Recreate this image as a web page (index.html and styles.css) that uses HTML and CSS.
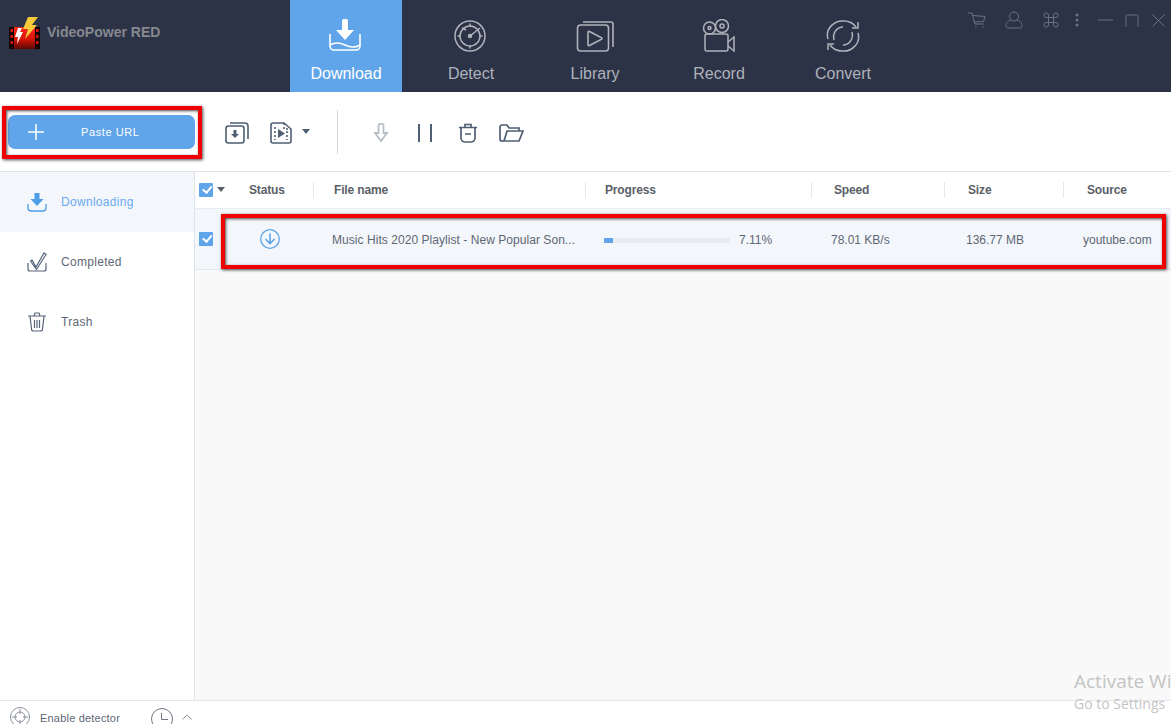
FILE: index.html
```html
<!DOCTYPE html>
<html lang="en">
<head>
    <meta charset="UTF-8">
    <meta name="viewport" content="width=device-width, initial-scale=1.0">
    <title>VideoPower RED</title>
    <link rel="stylesheet" href="styles.css">
</head>
<body>
    <!-- Top bar -->
    <header class="top-bar">
        <div class="brand">
            <svg class="brand_logo" width="31" height="32" viewBox="0 0 31 32">
                <defs>
                    <linearGradient id="film" x1="0" y1="0" x2="0" y2="1">
                        <stop offset="0" stop-color="#f5281a"/>
                        <stop offset="0.55" stop-color="#d81408"/>
                        <stop offset="1" stop-color="#5a0804"/>
                    </linearGradient>
                </defs>
                <path d="M0 10H31V32H0Z" fill="#120404"/>
                <path d="M5 10H26V32H5Z" fill="url(#film)"/>
                <path d="M1.500 12h2.500v3H1.500zM1.500 18h2.500v3H1.500zM1.500 24h2.500v3H1.500zM27 12h2.500v3H27zM27 18h2.500v3H27zM27 24h2.500v3H27z" fill="#d81408"/>
                <path d="M19 0H29L23 8H28L16 22L19 12H14Z" fill="#f5c93a"/>
                <path d="M9 11L6 20H9L8 27L14 15H11L13 11Z" fill="#fff"/>
            </svg>
            <span class="brand_name">VideoPower RED</span>
        </div>
        <nav class="main-nav">
            <div class="nav-item is-active">
                <svg class="nav-icon--download" width="34" height="34" viewBox="0 0 34 34" fill="none" stroke="#fff" stroke-width="1.600">
                    <path d="M14 2.500a3 3 0 0 1 6 0V11h6l-9 10-9-10h6z" fill="#fff" stroke="none"/>
                    <path d="M2 15V27a4 4 0 0 0 4 4H28a4 4 0 0 0 4-4V15"/>
                    <path d="M2 26c5-3 9-3 15 0s10 3 15 0"/>
                </svg>
                <span>Download</span>
            </div>
            <div class="nav-item nav-item--first">
                <svg class="nav-icon--detect" width="34" height="34" viewBox="0 0 34 34" fill="none" stroke="#aeb2bb" stroke-width="1.500">
                    <circle cx="17" cy="17" r="15"/>
                    <circle cx="17" cy="17" r="10"/>
                    <path d="M17 4.500v3M17 26.500v3M4.500 17h3M26.500 17h3"/>
                    <path d="M17 17l10-8M9 9l4 2"/>
                    <circle cx="17" cy="17" r="1.500" fill="#aeb2bb"/>
                </svg>
                <span>Detect</span>
            </div>
            <div class="nav-item">
                <svg width="38" height="34" viewBox="0 0 38 34" fill="none" stroke="#aeb2bb" stroke-width="1.600">
                    <rect x="1.500" y="6" width="31" height="26" rx="3"/>
                    <path d="M7 3H35a2 2 0 0 1 2 2V28"/>
                    <path d="M12 13.500a1 1 0 0 1 1.500-1L25 18.500a1 1 0 0 1 0 2L13.500 26.500a1 1 0 0 1-1.500-1z"/>
                </svg>
                <span>Library</span>
            </div>
            <div class="nav-item">
                <svg width="34" height="34" viewBox="0 0 34 34" fill="none" stroke="#aeb2bb" stroke-width="1.500">
                    <circle cx="7.500" cy="9" r="6"/>
                    <circle cx="7.500" cy="9" r="1.500"/>
                    <circle cx="20" cy="7" r="6.500"/>
                    <circle cx="20" cy="7" r="2"/>
                    <rect x="3" y="15" width="23" height="17" rx="2"/>
                    <path d="M26 23l6-5v14l-6-5"/>
                </svg>
                <span>Record</span>
            </div>
            <div class="nav-item">
                <svg width="36" height="34" viewBox="0 0 36 34" fill="none" stroke="#aeb2bb" stroke-width="1.500">
                    <path d="M3 20C0 10 9 1 19 2c5 0 9 2 12 6"/>
                    <path d="M33 3v6h-6"/>
                    <path d="M33 14c3 10-6 19-16 18-5 0-9-2-12-6"/>
                    <path d="M3 31v-6h6"/>
                    <path d="M9 21C7 13 13 8 18 8M27 13c2 8-4 13-9 13"/>
                </svg>
                <span>Convert</span>
            </div>
        </nav>
        <div class="window-tools">
            <svg width="20" height="16" viewBox="0 0 20 16" fill="none" stroke="#6b7181">
                <path d="M1 1h4l3 11h9M6 3.500l12 1-1.500 5-9 .5"/>
                <path d="M8 15h1.500M15 15h1.500"/>
            </svg>
            <svg class="tool-user" width="18" height="18" viewBox="0 0 18 18" fill="none" stroke="#6b7181">
                <circle cx="9" cy="5.500" r="4.500"/>
                <path d="M6 9c-4 1-5 4-5 6 0 1 1 2 2 2h12c1 0 2-1 2-2 0-2-1-5-5-6"/>
            </svg>
            <svg class="tool-cmd" width="16" height="16" viewBox="0 0 16 16" fill="none" stroke="#6b7181">
                <path d="M5.500 5.500h5v5h-5zM5.500 5.500H3.200a2.300 2.300 0 1 1 2.300-2.300zM10.500 5.500V3.200a2.300 2.300 0 1 1 2.300 2.300zM10.500 10.500h2.300a2.300 2.300 0 1 1-2.300 2.300zM5.500 10.500v2.300a2.300 2.300 0 1 1-2.300-2.300z"/>
            </svg>
            <svg class="tool-dots" width="4" height="14" viewBox="0 0 4 14" fill="#6b7181">
                <circle cx="2" cy="2" r="1.500"/><circle cx="2" cy="7" r="1.500"/><circle cx="2" cy="12" r="1.500"/>
            </svg>
            <svg class="tool-min" width="15" height="2" viewBox="0 0 15 2" stroke="#6b7181"><path d="M0 1h15"/></svg>
            <svg class="tool-max" width="14" height="13" viewBox="0 0 14 13" fill="none" stroke="#6b7181"><path d="M1 13V2.500Q1 1 2.500 1h9Q13 1 13 2.500V13"/></svg>
            <svg class="tool-close" width="13" height="13" viewBox="0 0 13 13" stroke="#6b7181"><path d="M.5.500l12 12M12.500.500l-12 12"/></svg>
        </div>
    </header>

    <!-- Toolbar -->
    <div class="toolbar">
        <button type="button" class="btn-paste">
            <svg width="16" height="16" viewBox="0 0 16 16" stroke="#fff" stroke-width="1.600"><path d="M8 0v16M0 8h16"/></svg>
            <span>Paste URL</span>
        </button>
        <div class="tool-group">
            <svg class="tool-icon" width="24" height="22" viewBox="0 0 24 22" fill="none" stroke="#4f5f73" stroke-width="1.600">
                <rect x="1" y="4" width="18" height="17" rx="2.500"/>
                <path d="M5 1h15a3 3 0 0 1 3 3v13"/>
                <path d="M8.500 8h3v4h2.500l-4 4-4-4h2.500z" fill="#4f5f73" stroke="none"/>
            </svg>
            <svg class="tool-icon" width="22" height="22" viewBox="0 0 22 22" fill="none" stroke="#4f5f73" stroke-width="1.600">
                <path d="M3 1h11l7 6v12a2 2 0 0 1-2 2H3a2 2 0 0 1-2-2V3a2 2 0 0 1 2-2z"/>
                <path d="M14 1v6h7M5 5v13M17 9v9" stroke-dasharray="2 2"/>
                <path d="M8 7l7 4.500L8 16z" fill="#4f5f73" stroke="none"/>
            </svg>
            <span class="caret"></span>
        </div>
        <div class="tool-divider"></div>
        <div class="tool-group tool-group--actions">
            <svg width="16" height="20" viewBox="0 0 16 20" fill="none" stroke="#b6bec8" stroke-width="1.800">
                <path d="M5.500 3a2.500 2.500 0 0 1 5 0v7H14l-6 8-6-8h3.500z"/>
            </svg>
            <svg class="action-pause" width="14" height="18" viewBox="0 0 14 18" stroke="#4f5f73" stroke-width="2"><path d="M1 0v18M13 0v18"/></svg>
            <svg class="action-trash" width="20" height="20" viewBox="0 0 20 20" fill="none" stroke="#4f5f73" stroke-width="1.700">
                <path d="M1 4.500h18M7 4.500V1.500h6v3M3 4.500V15a4 4 0 0 0 4 4h6a4 4 0 0 0 4-4V4.500M7 11h6"/>
            </svg>
            <svg class="action-folder" width="25" height="18" viewBox="0 0 25 18" fill="none" stroke="#4f5f73" stroke-width="1.700">
                <path d="M5 17H3a2 2 0 0 1-2-2V3a2 2 0 0 1 2-2h5l2 3h10v3"/>
                <path d="M5 17L8 7h16l-4 10z"/>
            </svg>
        </div>
    </div>

    <div class="content">
        <aside class="sidebar">
            <div class="side-item is-active">
                <svg width="20" height="20" viewBox="0 0 20 20" fill="none" stroke="#4f9de8" stroke-width="1.300">
                    <path d="M7.500 1h5v6h4l-6.500 7-6.500-7h4z" fill="#4f9de8" stroke="none"/>
                    <path d="M1 12v4a3 3 0 0 0 3 3h12a3 3 0 0 0 3-3v-4"/>
                </svg>
                <span>Downloading</span>
            </div>
            <div class="side-item">
                <svg width="20" height="20" viewBox="0 0 20 20" fill="none" stroke="#56647a" stroke-width="1.200">
                    <path d="M1 11v6a2 2 0 0 0 2 2h14a2 2 0 0 0 2-2v-6"/>
                    <path d="M5 8l4 7L17 1l2 1.500-9.500 15L3.500 9z"/>
                </svg>
                <span>Completed</span>
            </div>
            <div class="side-item">
                <svg width="20" height="20" viewBox="0 0 20 20" fill="none" stroke="#56647a" stroke-width="1.200">
                    <path d="M1 4h18M7 4l1-3h4l1 3M3 4l1.500 13a2 2 0 0 0 2 2h7a2 2 0 0 0 2-2L17 4M7.500 8v8M10 8v8M12.500 8v8"/>
                </svg>
                <span>Trash</span>
            </div>
        </aside>

        <main class="list">
            <div class="list-head">
                <div class="cell cell--status">
                    <span class="check"></span>
                    <span class="caret caret--small"></span>
                    <b class="status-title">Status</b>
                </div>
                <div class="cell cell--sep"><b>File name</b></div>
                <div class="cell cell--sep cell--progress-head"><b>Progress</b></div>
                <div class="cell cell--sep cell--speed"><b>Speed</b></div>
                <div class="cell cell--sep cell--size"><b>Size</b></div>
                <div class="cell cell--sep cell--source"><b>Source</b></div>
            </div>
            <div class="list-row">
                <div class="cell cell--status">
                    <span class="check"></span>
                    <svg class="row-status" width="20" height="20" viewBox="0 0 20 20" fill="none" stroke="#5ea4ea" stroke-width="1.300">
                        <circle cx="10" cy="10" r="9.300"/>
                        <path d="M10 4.500v10M5.500 10l4.500 4.500 4.500-4.500" stroke-width="1.600"/>
                    </svg>
                </div>
                <div class="cell cell--name">Music Hits 2020 Playlist - New Popular Son...</div>
                <div class="cell cell--progress">
                    <div class="bar"><div class="bar_fill" style="width: 7.11%"></div></div>
                    <span>7.11%</span>
                </div>
                <div class="cell cell--speed-val">78.01 KB/s</div>
                <div class="cell cell--size-val">136.77 MB</div>
                <div class="cell cell--source-val">youtube.com</div>
            </div>
        </main>
    </div>

    <footer class="status-bar">
        <svg width="20" height="20" viewBox="0 0 20 20" fill="none" stroke="#8b929d">
            <circle cx="10" cy="10" r="9.500"/>
            <circle cx="10" cy="10" r="5"/>
            <path d="M10 2v5M10 13v5M2 10h5M13 10h5"/>
        </svg>
        <span class="status-bar_label">Enable detector</span>
        <svg class="status-bar_clock" width="22" height="22" viewBox="0 0 22 22" fill="none" stroke="#6f7682">
            <circle cx="11" cy="11" r="10.500"/>
            <path d="M10.500 5v6.500H17"/>
        </svg>
        <svg class="status-bar_chevron" width="10" height="6" viewBox="0 0 10 6" fill="none" stroke="#8b929d"><path d="M.5 5.500L5 1l4.500 4.500"/></svg>
    </footer>

    <!-- Annotation boxes over the screenshot -->
    <div class="mark mark--paste"></div>
    <div class="mark mark--row"></div>

    <div class="watermark">
        <div class="watermark_title">Activate Wi</div>
        <div class="watermark_sub">Go to Settings</div>
    </div>
</body>
</html>
```

FILE: styles.css
```css
* {
    box-sizing: border-box;
}

html, body {
    margin: 0;
    height: 100%;
    overflow: hidden;
}

body {
    position: relative;
    display: flex;
    flex-direction: column;
    height: 724px;
    background: #fff;
    font-family: "Liberation Sans", Arial, sans-serif;
    font-size: 12px;
    color: #5e6776;
}

svg {
    display: block;
    flex-shrink: 0;
}

/* top bar */
.top-bar {
    display: flex;
    height: 92px;
    background: #2d3347;
}

.brand {
    display: flex;
    align-items: flex-start;
    width: 290px;
    padding: 17px 0 0 9px;
}

.brand_name {
    margin: 7px 0 0 7px;
    font-size: 14px;
    font-weight: bold;
    color: #85888f;
}

.main-nav {
    display: flex;
}

.nav-item {
    display: flex;
    flex-direction: column;
    align-items: center;
    width: 124px;
    padding-top: 19px;
    font-size: 16px;
    color: #aeb2bb;
}

.nav-item svg {
    height: 34px;
}

.nav-item span {
    margin-top: 12px;
}

.nav-item.is-active {
    width: 112px;
    background: #60a5e9;
    color: #fff;
}

.nav-item--first {
    margin-left: 7px;
}

.nav-icon--download {
    margin-right: 2px;
}

.nav-icon--detect {
    margin-right: 3px;
}

.window-tools {
    display: flex;
    align-items: center;
    height: 40px;
    margin-left: auto;
    padding-right: 6px;
}

.tool-user { margin-left: 18px; }
.tool-cmd { margin-left: 20px; }
.tool-dots { margin-left: 16px; }
.tool-min { margin-left: 19px; }
.tool-max { margin-left: 12px; }
.tool-close { margin-left: 13px; }

/* toolbar */
.toolbar {
    display: flex;
    align-items: center;
    height: 80px;
    padding: 0 0 0 8px;
    border-bottom: 1px solid #dfe4ea;
}

.btn-paste {
    display: flex;
    align-items: center;
    width: 187px;
    height: 34px;
    margin-top: 1px;
    padding: 0 0 0 20px;
    border: none;
    border-radius: 7px;
    background: #60a5e9;
    color: #fff;
    font-family: inherit;
    font-size: 11px;
    letter-spacing: 0.6px;
}

.btn-paste span {
    margin-left: 37px;
}

.tool-group {
    display: flex;
    align-items: center;
    margin: 2px 0 0 30px;
}

.tool-group .tool-icon + .tool-icon {
    margin-left: 21px;
}

.caret {
    width: 0;
    height: 0;
    margin-left: 10px;
    margin-bottom: 3px;
    border-left: 4px solid transparent;
    border-right: 4px solid transparent;
    border-top: 5px solid #4f5f73;
}

.tool-divider {
    width: 1px;
    height: 44px;
    margin-left: 27px;
    background: #d6dbe1;
}

.tool-group--actions {
    margin-left: 35px;
}

.action-pause { margin-left: 29px; }
.action-trash { margin-left: 26px; }
.action-folder { margin-left: 21px; }

/* body */
.content {
    display: flex;
    flex: 1;
    min-height: 0;
}

.sidebar {
    width: 195px;
    border-right: 1px solid #dfe4ea;
    background: #fff;
}

.side-item {
    display: flex;
    align-items: center;
    gap: 14px;
    height: 60px;
    padding-left: 27px;
    letter-spacing: 0.3px;
}

.side-item.is-active {
    background: #f3f6fa;
    color: #6aaaf0;
}

.list {
    flex: 1;
    background: #f9f9f9;
}

.list-head,
.list-row {
    display: grid;
    grid-template-columns: 118px 272px 226px 133px 119px 1fr;
    align-items: center;
}

.list-head {
    height: 37px;
    padding-bottom: 1px;
    background: #fff;
    border-bottom: 1px solid #e8ecf1;
    letter-spacing: -0.15px;
    color: #5a5f68;
}

.list-row {
    height: 61px;
    background: #f3f6fa;
    border-bottom: 1px solid #e4e8ee;
}

.cell {
    display: flex;
    align-items: center;
    white-space: nowrap;
}

.cell--status {
    padding-left: 4px;
}

.cell--sep {
    height: 16px;
    padding-left: 20px;
    border-left: 1px solid #e6e9ee;
}

.cell--progress-head { padding-left: 19px; }
.cell--speed { padding-left: 22px; }
.cell--size { padding-left: 23px; }
.cell--source { padding-left: 23px; }

.check {
    position: relative;
    width: 14px;
    height: 14px;
    border-radius: 1px;
    background: #60a5e9;
}

.check::after {
    content: "";
    position: absolute;
    left: 3px;
    top: 2px;
    width: 7px;
    height: 4px;
    border-left: 2px solid #fff;
    border-bottom: 2px solid #fff;
    transform: rotate(-50deg) translate(0, 1px);
}

.caret--small {
    margin-left: 4px;
    margin-bottom: 0;
    border-top-color: #5a5f68;
}

.status-title {
    margin-left: 24px;
}

.row-status {
    margin-left: 47px;
}

.cell--name,
.cell--progress,
.cell--speed-val,
.cell--size-val,
.cell--source-val {
    padding-top: 2px;
}

.cell--name {
    padding-left: 19px;
    letter-spacing: 0.05px;
}

.cell--progress {
    padding-left: 19px;
}

.cell--progress span {
    margin-left: 9px;
}

.bar {
    width: 126px;
    height: 5px;
    background: #e8ecf1;
}

.bar_fill {
    height: 100%;
    background: #60a5e9;
}

.cell--speed-val { padding-left: 20px; }
.cell--size-val { padding-left: 22px; }
.cell--source-val { padding-left: 20px; }

/* status bar */
.status-bar {
    display: flex;
    align-items: flex-start;
    height: 24px;
    padding: 6px 0 0 10px;
    border-top: 1px solid #e4e8ee;
    background: #fff;
    overflow: hidden;
    font-size: 11px;
}

.status-bar_label {
    margin: 5px 0 0 10px;
    letter-spacing: 0.2px;
}

.status-bar_clock {
    margin: 1px 0 0 31px;
}

.status-bar_chevron {
    margin: 7px 0 0 9px;
}

/* annotation boxes */
.mark {
    position: absolute;
    border: 4px solid #f00000;
    box-shadow: 1px 1px 3px rgba(0, 0, 0, 0.7), inset 1px 1px 3px rgba(0, 0, 0, 0.7);
}

.mark--paste {
    left: 2px;
    top: 106px;
    width: 200px;
    height: 53px;
}

.mark--row {
    left: 221px;
    top: 214px;
    width: 945px;
    height: 55px;
}

.watermark {
    position: absolute;
    left: 1074px;
    top: 669px;
    white-space: nowrap;
    font-family: "Open Sans", sans-serif;
    color: #c4c4c4;
}

.watermark_title {
    font-size: 19px;
    line-height: 25px;
}

.watermark_sub {
    font-size: 14px;
    line-height: 20px;
}
```
